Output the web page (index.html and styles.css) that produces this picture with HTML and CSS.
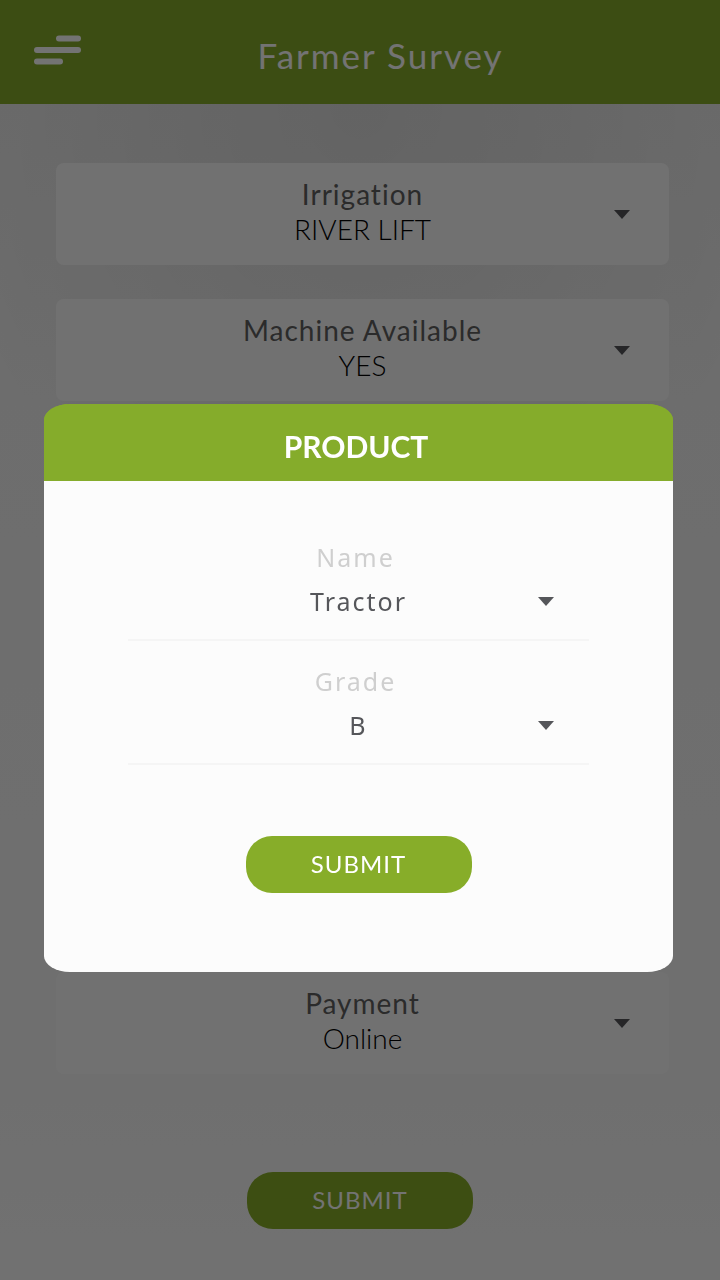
FILE: index.html
```html
<!DOCTYPE html>
<html lang="en">
<head>
<meta charset="utf-8">
<meta name="viewport" content="width=device-width, initial-scale=1">
<title>Farmer Survey</title>
<link rel="stylesheet" href="styles.css">
</head>
<body>
<div class="page">
  <header class="topbar">
    <button class="menu" type="button" aria-label="Menu">
      <svg width="47" height="30" viewBox="0 0 47 30" fill="none" stroke="currentColor" stroke-width="6" stroke-linecap="round" aria-hidden="true">
        <path d="M25 3.5H44M3 15H44M3 26.5H26"/>
      </svg>
    </button>
    <h1 class="title">Farmer Survey</h1>
  </header>
  <form class="survey">
    <div class="card">
      <label class="card-label" for="irrigation">Irrigation</label>
      <select class="card-select" id="irrigation"><option>RIVER LIFT</option></select>
      <svg class="caret" width="16" height="9" viewBox="0 0 16 9" aria-hidden="true"><path d="M0 0H16L8 9Z"/></svg>
    </div>
    <div class="card">
      <label class="card-label" for="machine">Machine Available</label>
      <select class="card-select" id="machine"><option>YES</option></select>
      <svg class="caret" width="16" height="9" viewBox="0 0 16 9" aria-hidden="true"><path d="M0 0H16L8 9Z"/></svg>
    </div>
    <div class="card card-last">
      <label class="card-label" for="payment">Payment</label>
      <select class="card-select" id="payment"><option>Online</option></select>
      <svg class="caret" width="16" height="9" viewBox="0 0 16 9" aria-hidden="true"><path d="M0 0H16L8 9Z"/></svg>
    </div>
    <button class="submit" type="button">SUBMIT</button>
  </form>
</div>
<div class="overlay">
  <section class="dialog" role="dialog" aria-modal="true" aria-labelledby="dialog-title">
    <h2 class="dialog-title" id="dialog-title">PRODUCT</h2>
    <form class="dialog-body">
      <div class="field">
        <label class="field-label" for="name">Name</label>
        <select class="field-select" id="name"><option>Tractor</option></select>
        <svg class="caret" width="16" height="9" viewBox="0 0 16 9" aria-hidden="true"><path d="M0 0H16L8 9Z"/></svg>
      </div>
      <div class="field">
        <label class="field-label" for="grade">Grade</label>
        <select class="field-select" id="grade"><option>B</option></select>
        <svg class="caret" width="16" height="9" viewBox="0 0 16 9" aria-hidden="true"><path d="M0 0H16L8 9Z"/></svg>
      </div>
      <button class="submit" type="button">SUBMIT</button>
    </form>
  </section>
</div>
</body>
</html>
```

FILE: styles.css
```css
* {
  box-sizing: border-box;
}

body {
  margin: 0;
  font-family: Lato, "Liberation Sans", sans-serif;
}

.page {
  display: flex;
  flex-direction: column;
  min-height: 100vh;
  background:
    radial-gradient(ellipse 60% 500px at 50% 104px, rgba(0, 0, 0, 0.07), transparent),
    linear-gradient(#ececec 104px, #f2f2f2 400px, #f7f7f7 1100px, #fbfbfb);
}

.topbar {
  display: flex;
  align-items: center;
  height: 104px;
  padding: 0 40px 0 34px;
  background: #85ac2b;
  color: #fff;
}

.menu {
  display: flex;
  padding: 0;
  margin-bottom: 4px;
  border: 0;
  background: none;
  color: inherit;
}

.title {
  flex: 1;
  margin: 6px 0 0;
  font-size: 35px;
  font-weight: 400;
  line-height: 40px;
  letter-spacing: 2px;
  text-align: center;
}

.survey {
  flex: 1;
  display: flex;
  flex-direction: column;
  gap: 34px;
  padding: 59px 0 51px;
}

.card {
  position: relative;
  display: flex;
  flex-direction: column;
  height: 102px;
  margin: 0 51px 0 56px;
  padding-top: 13px;
  border-radius: 8px;
  background: #fbfbfb;
  text-align: center;
}

.card-last {
  margin-top: auto;
}

.card-label {
  color: #606060;
  font-size: 28px;
  line-height: 36px;
  letter-spacing: 1px;
}

.card-select,
.field-select {
  width: 100%;
  padding: 0;
  border: 0;
  background: none;
  appearance: none;
  font-family: inherit;
  text-align: center;
  text-align-last: center;
}

.card-select {
  height: 35px;
  color: #000;
  font-size: 28px;
  font-weight: 300;
  line-height: 35px;
}

.caret {
  position: absolute;
  right: 39px;
  bottom: 46px;
  fill: #55565a;
  pointer-events: none;
}

.submit {
  align-self: center;
  width: 226px;
  height: 57px;
  padding: 0 0 2px;
  border: 0;
  border-radius: 26px;
  background: #87ad29;
  color: #fff;
  font-family: inherit;
  font-size: 24px;
  letter-spacing: 1px;
}

.survey .submit {
  margin-top: 64px;
}

.overlay {
  position: fixed;
  inset: 0;
  display: flex;
  align-items: center;
  padding: 96px 47px 0 44px;
  background: rgba(0, 0, 0, 0.55);
}

.dialog {
  flex: 1;
  overflow: hidden;
  border-radius: 26px / 16px;
  background: linear-gradient(#85ac2b 50px, #fcfcfc 50px);
}

.dialog-title {
  margin: 0;
  padding: 7px 5px 0 0;
  background: #85ac2b;
  color: #fff;
  font-size: 30px;
  font-weight: 700;
  line-height: 70px;
  text-align: center;
}

.dialog-body {
  display: flex;
  flex-direction: column;
  gap: 20px;
  padding: 56px 84px 79px;
}

.field {
  position: relative;
  display: flex;
  flex-direction: column;
  padding-bottom: 14px;
  border-bottom: 2px solid #f5f5f5;
  font-family: "Noto Sans", sans-serif;
}

.field-label {
  padding-right: 6px;
  color: #cfcfcf;
  font-size: 25px;
  line-height: 40px;
  letter-spacing: 2px;
  text-align: center;
}

.field-select {
  height: 48px;
  color: #55565a;
  font-size: 25px;
  line-height: 48px;
  letter-spacing: 2px;
}

.field .caret {
  right: 35px;
  bottom: 33px;
}

.dialog .submit {
  margin-top: 51px;
}
```
